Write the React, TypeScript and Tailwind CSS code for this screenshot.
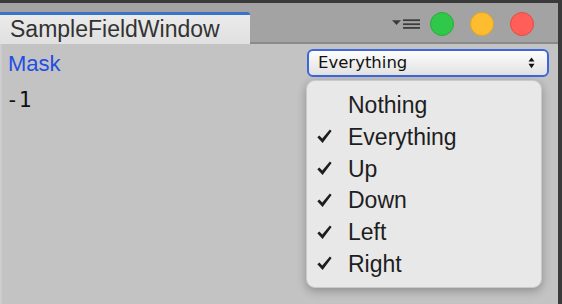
const items = [
  { label: "Nothing", checked: false },
  { label: "Everything", checked: true },
  { label: "Up", checked: true },
  { label: "Down", checked: true },
  { label: "Left", checked: true },
  { label: "Right", checked: true },
];

function Check() {
  return (
    <svg width="15" height="15" viewBox="0 0 15 15" className="text-[#1e1e1e]">
      <path
        d="M0.3 8.2 L2.4 6.4 L5.2 9.6 L12.9 0.6 L14.6 1.9 L5.6 14 Z"
        fill="currentColor"
      />
    </svg>
  );
}

function MenuIcon() {
  return (
    <svg width="28" height="10" viewBox="0 0 28 10" className="text-[#3c3c3c]">
      <polygon points="0,1.3 9,1.3 4.5,6" fill="currentColor" />
      <rect x="11" y="0.3" width="17" height="1.8" fill="currentColor" />
      <rect x="11" y="4.3" width="17" height="1.8" fill="currentColor" />
      <rect x="11" y="8" width="17" height="1.8" fill="currentColor" />
    </svg>
  );
}

export default function App() {
  return (
    <div className="w-[562px] h-[304px] bg-[#3a3a3a] pt-[3px] pr-[4px] overflow-hidden font-['Liberation_Sans',Arial,sans-serif]">
      <div className="h-full flex flex-col">
        {/* Tab bar */}
        <div className="h-[41px] shrink-0 bg-[#a3a3a3] flex items-end relative">
          <div className="absolute left-0 right-0 bottom-0 h-[2px] bg-[#8a8a8a]" />
          <div className="relative w-[250px] h-[32px] border-t-[3px] border-[#3a73c8] rounded-tr-[3px] bg-gradient-to-b from-[#ebebeb] to-[#e0e0e0] flex items-center pl-[10px]">
            <span className="text-[23px] leading-[24px] text-[#333] pb-[2px]">SampleFieldWindow</span>
          </div>
          <div className="ml-auto self-center flex items-center pr-[24px]">
            <MenuIcon />
            <div className="ml-[10px] w-[24px] h-[24px] rounded-full bg-[#2fc84a] border border-[#25ad3c]" />
            <div className="ml-[16px] w-[24px] h-[24px] rounded-full bg-[#fdbd2f] border border-[#e2a52a]" />
            <div className="ml-[16px] w-[24px] h-[24px] rounded-full bg-[#ff5f58] border border-[#e44b44]" />
          </div>
        </div>

        {/* Content */}
        <div className="flex-1 relative bg-[#c3c3c3] border-l-2 border-[#cdcdcd]">
          <div className="flex justify-between items-start pt-[5px] pl-[6px] pr-[9px]">
            <span className="mt-[3px] text-[22px] leading-[24px] text-[#1f4ee3]">Mask</span>
            <div className="w-[242px] h-[28px] rounded-[6px] border-2 border-[#3d66de] bg-gradient-to-b from-[#fdfdfd] to-[#e2e2e2] flex items-center pl-[9px] pr-[12px]">
              <span className="text-[16.5px] leading-[20px] text-[#111] font-['DejaVu_Sans',sans-serif]">Everything</span>
              <svg width="7" height="12" viewBox="0 0 7 12" className="ml-auto text-[#111]">
                <polygon points="0.5,4.5 6.5,4.5 3.5,0.5" fill="currentColor" />
                <polygon points="0.5,6.8 6.5,6.8 3.5,11.3" fill="currentColor" />
              </svg>
            </div>
          </div>
          <div className="mt-[11px] pl-[4px] text-[21px] leading-[24px] text-[#111] font-['DejaVu_Sans_Mono',monospace]">-1</div>

          {/* Popup menu */}
          <div className="absolute left-[304px] top-[36px] w-[236px] h-[208px] rounded-[9px] bg-[#e8e8e8] border border-[#c9c9c9] shadow-[0_3px_10px_rgba(0,0,0,0.28)] pt-[8px]">
            {items.map((item) => (
              <div key={item.label} className="h-[31.8px] flex items-center">
                <div className="w-[41px] flex justify-end pr-[16px]">
                  {item.checked && <Check />}
                </div>
                <span className="text-[23px] leading-[32px] text-[#1e1e1e]">{item.label}</span>
              </div>
            ))}
          </div>
        </div>
      </div>
    </div>
  );
}
